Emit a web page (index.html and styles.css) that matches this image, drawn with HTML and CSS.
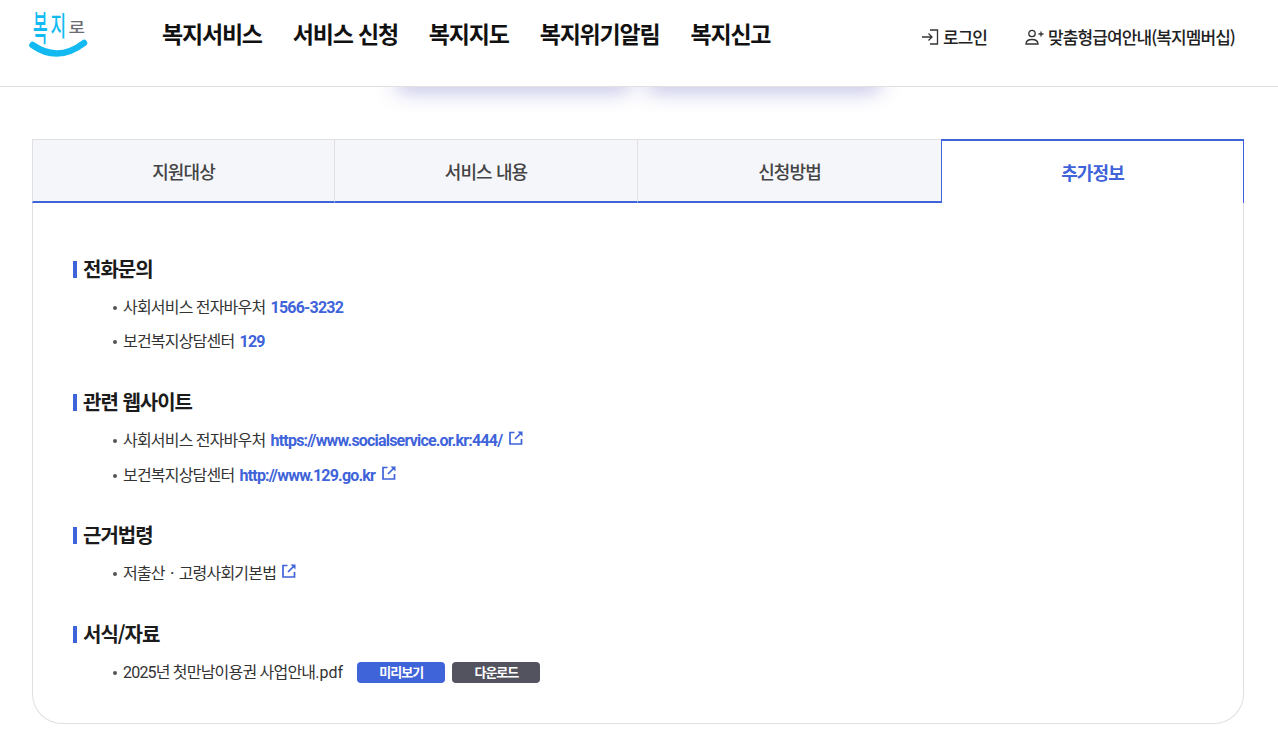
FILE: index.html
```html
<!DOCTYPE html>
<html lang="ko">
<head>
<meta charset="utf-8">
<title>복지로</title>
<link rel="stylesheet" href="styles.css">
</head>
<body>
<header class="header">
  <a class="logo" href="#" aria-label="복지로">
    <svg class="logo-svg" width="62" height="60" viewBox="0 0 62 60">
      <text transform="translate(5 37.500) scale(1 2.200)" class="logo-a">복</text>
      <text transform="translate(22.500 32.500) scale(1 1.600)" class="logo-a logo-b">지</text>
      <text transform="translate(40.500 29.500) scale(1 .8)" class="logo-g">로</text>
      <path d="M4.500 42Q30 60 56 40" fill="none" stroke="#13baf2" stroke-width="6.500" stroke-linecap="round"/>
    </svg>
  </a>
  <nav class="gnb">
    <a href="#">복지서비스</a>
    <a href="#">서비스 신청</a>
    <a href="#">복지지도</a>
    <a href="#">복지위기알림</a>
    <a href="#">복지신고</a>
  </nav>
  <div class="util">
    <a href="#" class="util-link">
      <svg width="18" height="16" viewBox="0 0 18 16" fill="none" stroke="#333" stroke-width="1.300"><path d="M1 8H11M7.500 4.500L11 8L7.500 11.500"/><path d="M9 1H16.500V15H9"/></svg>
      로그인
    </a>
    <a href="#" class="util-link">
      <svg width="19" height="16" viewBox="0 0 19 16" fill="none" stroke="#333" stroke-width="1.300"><circle cx="7" cy="4.500" r="3.200"/><path d="M1 15C1 11.500 3.500 10.500 7 10.500C10.500 10.500 13 11.500 13 15Z"/><path d="M13.500 5H18.500M16 2.500V7.500"/></svg>
      맞춤형급여안내(복지멤버십)
    </a>
  </div>
</header>

<div class="shadow-strip">
  <div class="shadow-card"></div>
  <div class="shadow-card"></div>
</div>

<main class="content">
  <ul class="tabs">
    <li class="tab">지원대상</li>
    <li class="tab">서비스 내용</li>
    <li class="tab">신청방법</li>
    <li class="tab tab-on">추가정보</li>
  </ul>
  <div class="panel">
    <section class="group">
      <h3 class="title">전화문의</h3>
      <ul class="list">
        <li>사회서비스 전자바우처 <b class="em">1566-3232</b></li>
        <li>보건복지상담센터 <b class="em">129</b></li>
      </ul>
    </section>
    <section class="group group-links">
      <h3 class="title">관련 웹사이트</h3>
      <ul class="list">
        <li>사회서비스 전자바우처 <a class="em" href="#">https://www.socialservice.or.kr:444/</a>
          <svg class="ext" width="14" height="14" viewBox="0 0 14 14" fill="none" stroke="#3f63d9" stroke-width="1.700"><path d="M5.500 1.500H1V13H12.500V8"/><path d="M6 8L11.500 2.500"/><path d="M8.500 .5H13.500V5.500Z" fill="#3f63d9" stroke="none"/></svg></li>
        <li>보건복지상담센터 <a class="em" href="#">http://www.129.go.kr</a>
          <svg class="ext" width="14" height="14" viewBox="0 0 14 14" fill="none" stroke="#3f63d9" stroke-width="1.700"><path d="M5.500 1.500H1V13H12.500V8"/><path d="M6 8L11.500 2.500"/><path d="M8.500 .5H13.500V5.500Z" fill="#3f63d9" stroke="none"/></svg></li>
      </ul>
    </section>
    <section class="group">
      <h3 class="title">근거법령</h3>
      <ul class="list">
        <li>저출산ㆍ고령사회기본법
          <svg class="ext" width="14" height="14" viewBox="0 0 14 14" fill="none" stroke="#3f63d9" stroke-width="1.700"><path d="M5.500 1.500H1V13H12.500V8"/><path d="M6 8L11.500 2.500"/><path d="M8.500 .5H13.500V5.500Z" fill="#3f63d9" stroke="none"/></svg></li>
      </ul>
    </section>
    <section class="group">
      <h3 class="title">서식/자료</h3>
      <ul class="list">
        <li class="file">2025년 첫만남이용권 사업안내<span class="file-ext">.pdf</span>
          <a href="#" class="btn btn-blue">미리보기</a>
          <a href="#" class="btn btn-dark">다운로드</a></li>
      </ul>
    </section>
  </div>
</main>
</body>
</html>
```
FILE: styles.css
```css
* { box-sizing: border-box; }
html, body { margin: 0; padding: 0; }
body {
  font-family: Roboto, "Noto Sans CJK KR", sans-serif;
  color: #222;
  background: #fff;
  overflow: hidden;
}
a { color: inherit; text-decoration: none; }
ul { list-style: none; margin: 0; padding: 0; }

.header {
  display: flex;
  height: 87px;
  border-bottom: 1px solid #e0e0e0;
  padding-left: 28px;
  position: relative;
  z-index: 2;
  background: #fff;
}
.logo { display: block; width: 62px; height: 60px; margin-top: 3px; }
.logo-svg { overflow: visible; }
.logo-a { font: 500 16px "Noto Sans CJK KR", sans-serif; fill: #13baf2; }
.logo-b { font-size: 17px; }
.logo-g { font: 500 18px "Noto Sans CJK KR", sans-serif; fill: #6b6b73; }

.gnb {
  display: flex;
  gap: 31px;
  margin-left: 72px;
  padding-top: 17px;
  font: 700 23px/32px "Noto Sans CJK KR", sans-serif;
  letter-spacing: -1.200px;
  color: #111;
}
.util {
  display: flex;
  gap: 38px;
  margin-left: auto;
  padding: 22px 43px 0 0;
  font: 500 17px/30px "Noto Sans CJK KR", sans-serif;
  letter-spacing: -0.920px;
  color: #222;
}
.util-link { display: flex; align-items: center; gap: 4px; height: 30px; }

.shadow-strip {
  display: flex;
  gap: 13px;
  height: 52px;
  padding-left: 395px;
  overflow: hidden;
}
.shadow-card {
  width: 237px;
  height: 20px;
  margin-top: -20px;
  background: #fff;
  box-shadow: 0 5px 20px 0 rgba(90, 90, 190, 0.38);
  border-radius: 10px;
}

.content { margin: 0 34px 0 32px; }
.tabs { display: grid; grid-template-columns: 302px 303px 304px 303px; height: 64px; }
.tab {
  display: flex;
  align-items: center;
  justify-content: center;
  background: #f5f6fa;
  border-top: 1px solid #e0e0e0;
  border-left: 1px solid #e0e0e0;
  border-bottom: 2px solid #3f63d9;
  font: 500 18px "Noto Sans CJK KR", sans-serif;
  letter-spacing: -0.900px;
  color: #444;
}
.tab-on {
  background: #fff;
  border: solid #3f63d9;
  border-width: 2px 1px 0;
  color: #3f63d9;
  font-weight: 700;
}
.panel {
  height: 521px;
  border: 1px solid #e0e0e0;
  border-top: 0;
  border-radius: 0 0 30px 30px;
  padding: 52px 40px 0;
}
.group { margin-bottom: 29px; }
.group-links { margin-bottom: 28px; }
.group-links li:first-child { height: 35px; }
.title {
  margin: 0 0 8px;
  padding-left: 10px;
  font: 700 20px/28px "Noto Sans CJK KR", sans-serif;
  color: #1b1b1b;
  letter-spacing: -1px;
  position: relative;
}
.title::before {
  content: "";
  position: absolute;
  left: 0;
  top: 6px;
  width: 4px;
  height: 17px;
  background: #3f63d9;
}
.list { padding-left: 40px; }
.list li {
  position: relative;
  padding-left: 10px;
  height: 34px;
  font-size: 16px;
  line-height: 34px;
  letter-spacing: -0.800px;
  color: #333;
}
.list li::before {
  content: "";
  position: absolute;
  left: 0;
  top: 15px;
  width: 4px;
  height: 4px;
  border-radius: 50%;
  background: #555;
}
.em { color: #3f63d9; font-weight: 700; margin-left: 2px; }
.ext { margin-left: 3px; vertical-align: 1px; }
.em + .ext { margin-left: 4px; }
.file-ext { letter-spacing: 0; }
.btn {
  display: inline-block;
  width: 88px;
  height: 21px;
  margin-left: 11px;
  border-radius: 4px;
  color: #fff;
  font: 700 13px/20px "Noto Sans CJK KR", sans-serif;
  letter-spacing: -1px;
  text-align: center;
  vertical-align: 1px;
}
.btn + .btn { margin-left: 4px; }
.btn-blue { background: #3f63d9; }
.btn-dark { background: #53535f; }
```
